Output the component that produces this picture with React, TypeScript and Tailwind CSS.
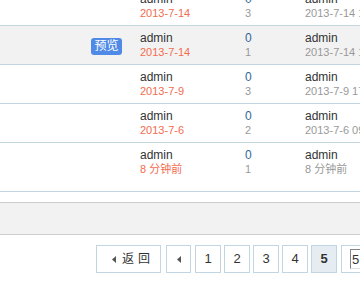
import React from "react";

type Thread = {
  preview: boolean;
  author: string;
  date: string;
  replies: number;
  views: number;
  lastUser: string;
  lastDate: string;
  hover?: boolean;
  tall?: boolean;
};

const threads: Thread[] = [
  { preview: false, author: "admin", date: "2013-7-14", replies: 0, views: 3, lastUser: "admin", lastDate: "2013-7-14 15:32" },
  { preview: true, author: "admin", date: "2013-7-14", replies: 0, views: 1, lastUser: "admin", lastDate: "2013-7-14 11:08", hover: true },
  { preview: false, author: "admin", date: "2013-7-9", replies: 0, views: 3, lastUser: "admin", lastDate: "2013-7-9 17:45" },
  { preview: false, author: "admin", date: "2013-7-6", replies: 0, views: 2, lastUser: "admin", lastDate: "2013-7-6 09:21" },
  { preview: false, author: "admin", date: "8 分钟前", replies: 0, views: 1, lastUser: "admin", lastDate: "8 分钟前", tall: true },
];

const font = "font-['Liberation_Sans','Noto_Sans_CJK_SC',sans-serif]";

function PrevArrow() {
  return (
    <svg width="4" height="7" viewBox="0 0 4 7" className="shrink-0">
      <path d="M4 0 L0 3.5 L4 7 Z" fill="#555" />
    </svg>
  );
}

export default function App() {
  return (
    <div className={`w-[360px] h-[286px] overflow-hidden bg-white ${font}`}>
      <div className="-mt-[13px]">
        {threads.map((t, i) => (
          <div
            key={i}
            className={`flex border-b border-[#c2d5e3] pt-[5px] ${t.tall ? "pb-[15px]" : "pb-[5px]"} ${t.hover ? "bg-[#f2f2f2]" : "bg-white"}`}
          >
            <div className="w-[140px] flex items-center justify-end pr-[18px]">
              {t.preview && (
                <span className="mt-[2px] h-[17px] w-[31px] rounded-[3px] bg-[#4f8ae6] text-white text-[12px] leading-[17px] text-center">
                  预览
                </span>
              )}
            </div>
            <div className="w-[105px] leading-[14px]">
              <div className="text-[12px] text-[#333]">{t.author}</div>
              <div className="text-[11px] text-[#f26c4f]">{t.date}</div>
            </div>
            <div className="w-[60px] leading-[14px]">
              <div className="text-[12px] text-[#369]">{t.replies}</div>
              <div className="text-[11px] text-[#999]">{t.views}</div>
            </div>
            <div className="flex-1 leading-[14px] whitespace-nowrap overflow-hidden">
              <div className="text-[12px] text-[#333]">{t.lastUser}</div>
              <div className="text-[11px] text-[#999]">{t.lastDate}</div>
            </div>
          </div>
        ))}
      </div>

      <div className="mt-[10px] h-[33px] border-y border-[#cdcdcd] bg-[#f2f2f2]" />

      <div className="mt-[10px] ml-[96px] flex whitespace-nowrap text-[12px] text-[#333]">
        <a className="flex h-[28px] w-[65px] shrink-0 items-center gap-[6px] border border-[#c2d5e3] bg-white pl-[15px]">
          <PrevArrow />
          <span className="tracking-[4px]">返回</span>
        </a>
        <a className="ml-[5px] flex h-[28px] w-[25px] shrink-0 items-center justify-center border border-[#c2d5e3] bg-white">
          <PrevArrow />
        </a>
        {[1, 2, 3, 4].map((n) => (
          <a
            key={n}
            className={`${n === 1 ? "ml-[4px]" : "ml-[3px]"} flex h-[28px] w-[26px] shrink-0 items-center justify-center border border-[#c2d5e3] bg-white text-[13px]`}
          >
            {n}
          </a>
        ))}
        <strong className="ml-[3px] flex h-[28px] w-[26px] shrink-0 items-center justify-center border border-[#c2d5e3] bg-[#e5edf2] text-[13px] font-bold">
          5
        </strong>
        <div className="ml-[4px] flex h-[28px] w-[60px] shrink-0 items-center border border-[#c2d5e3] bg-white pl-[8px]">
          <input
            readOnly
            value="5"
            className="h-[20px] w-[26px] border border-t-[#848484] border-l-[#848484] border-r-[#e0e0e0] border-b-[#e0e0e0] px-[1px] text-[13px] text-[#333] outline-none"
          />
        </div>
      </div>
    </div>
  );
}
